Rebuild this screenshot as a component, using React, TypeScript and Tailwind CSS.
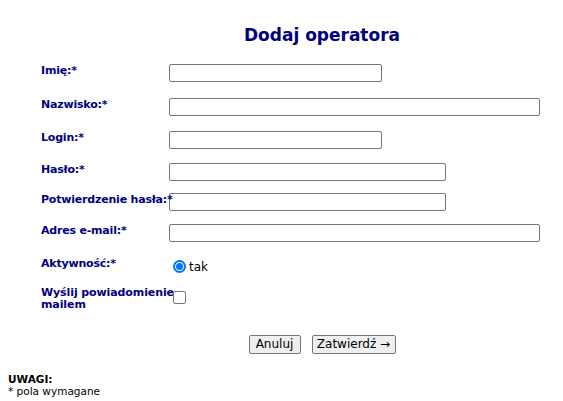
import React from "react";

const font = { fontFamily: "Tahoma, 'DejaVu Sans', Verdana, sans-serif" };

type Field = { label: string; width: string; h: string };

const fields: Field[] = [
  { label: "Imię:", width: "w-[213px]", h: "h-[34px]" },
  { label: "Nazwisko:", width: "w-[371px]", h: "h-[33px]" },
  { label: "Login:", width: "w-[213px]", h: "h-[32px]" },
  { label: "Hasło:", width: "w-[277px]", h: "h-[30px]" },
  { label: "Potwierdzenie hasła:", width: "w-[277px]", h: "h-[31px]" },
  { label: "Adres e-mail:", width: "w-[371px]", h: "h-[33px]" },
];

function Label({ children }: { children: React.ReactNode }) {
  return (
    <div className="relative z-10 w-[128px] shrink-0 whitespace-nowrap text-[11px] leading-[13px] font-bold text-[#000080] tracking-[-0.2px]">
      {children}
    </div>
  );
}

export default function App() {
  return (
    <div className="min-h-[401px] bg-white text-black" style={font}>
      <h1 className="pl-[81px] pt-[24px] text-center text-[17px] leading-[22px] font-bold text-[#000080]">
        Dodaj operatora
      </h1>

      <form className="mt-[18px] pl-[41px]">
        {fields.map((f) => (
          <div key={f.label} className={`flex items-start ${f.h}`}>
            <Label>
              {f.label}*
            </Label>
            <input
              type="text"
              className={`${f.width} h-[18px] rounded-[2px] border border-[#767676] bg-transparent`}
            />
          </div>
        ))}

        <div className="flex h-[30px] items-start">
          <Label>Aktywność:*</Label>
          <label className="ml-[4px] mt-[1px] flex items-center gap-[3px] text-[12px] leading-[14px] text-black">
            <span className="flex h-[13px] w-[13px] items-center justify-center rounded-full border-2 border-[#0075ff] bg-white">
              <span className="h-[7px] w-[7px] rounded-full bg-[#0075ff]" />
            </span>
            <span className="mt-[2px]">tak</span>
          </label>
        </div>

        <div className="flex h-[48px] items-start">
          <div className="w-[132px] shrink-0 whitespace-nowrap text-[11px] leading-[12px] font-bold text-[#000080] tracking-[-0.1px]">
            Wyślij powiadomienie
            <br />
            mailem
          </div>
          <span className="mt-[4px] h-[13px] w-[13px] rounded-[2px] border border-[#767676] bg-white" />
        </div>
      </form>

      <div className="flex justify-center gap-[11px] pl-[81px]">
        <button
          type="button"
          className="h-[19px] w-[52px] rounded-[2px] border border-[#767676] bg-[#efefef] text-[12px] leading-[17px] text-black"
        >
          Anuluj
        </button>
        <button
          type="button"
          className="h-[19px] w-[84px] rounded-[2px] border border-[#767676] bg-[#efefef] text-[12px] leading-[17px] text-black"
        >
          Zatwierdź →
        </button>
      </div>

      <div className="mt-[19px] pl-[8px] text-[10.5px] leading-[12px]">
        <div className="font-bold">UWAGI:</div>
        <div>* pola wymagane</div>
      </div>
    </div>
  );
}
